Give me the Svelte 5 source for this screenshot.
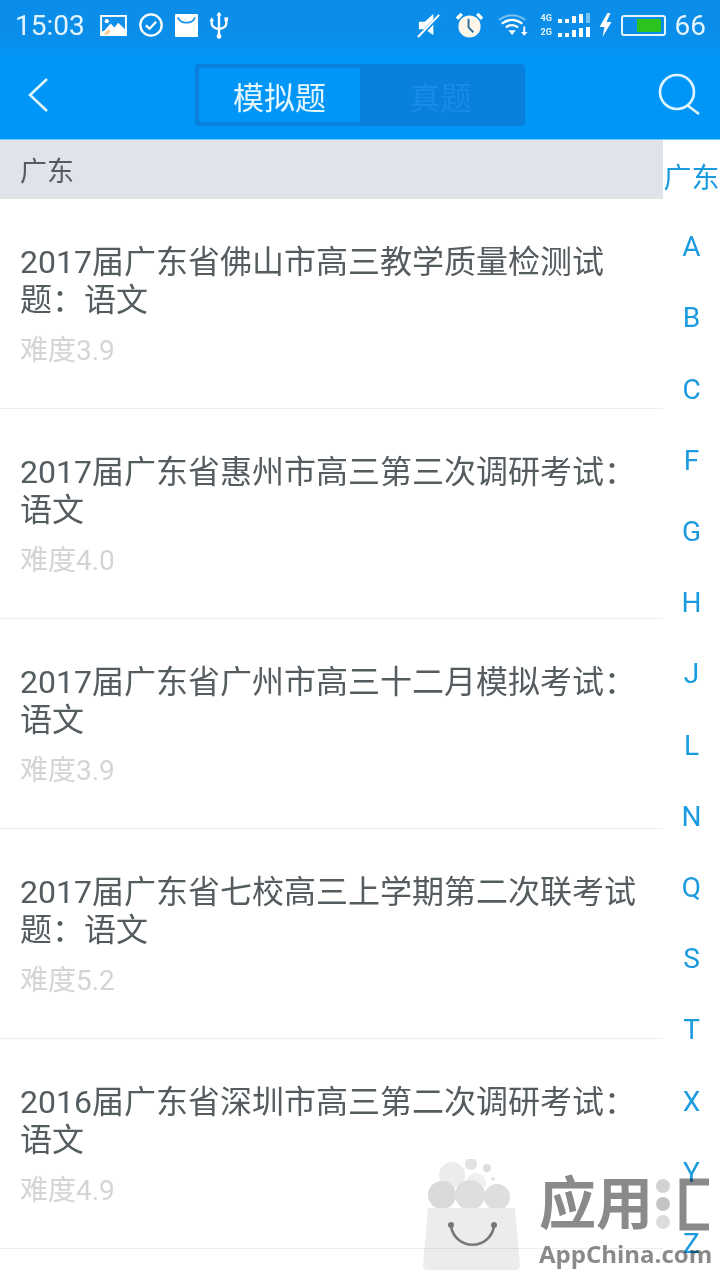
<script>
  const papers = [
    { title: '2017届广东省佛山市高三教学质量检测试题：语文', level: '3.9' },
    { title: '2017届广东省惠州市高三第三次调研考试：语文', level: '4.0' },
    { title: '2017届广东省广州市高三十二月模拟考试：语文', level: '3.9' },
    { title: '2017届广东省七校高三上学期第二次联考试题：语文', level: '5.2' },
    { title: '2016届广东省深圳市高三第二次调研考试：语文', level: '4.9' }
  ];
  const letters = ['广东', 'A', 'B', 'C', 'F', 'G', 'H', 'J', 'L', 'N', 'Q', 'S', 'T', 'X', 'Y', 'Z'];
  const bars = [4, 4, 7, 9, 10];
</script>

<div class="screen">
  <header class="top">
    <div class="status">
      <div class="status-left">
        <span class="time">15:03</span>
        <svg class="ic" width="27" height="21" viewBox="0 0 28 22">
          <rect width="28" height="22" fill="#fff" />
          <rect x="2" y="2" width="24" height="15" fill="#1090ea" />
          <circle cx="7" cy="6.5" r="2.2" fill="#fff" />
          <path d="M2 19 L11 9 L15 13 L19 8 L26 15 V22 H2 Z" fill="#fff" />
          <path d="M4 20 L9 15 L11 17 L7 21 Z" fill="#f4c98a" />
        </svg>
        <svg class="ic check" width="26" height="26" viewBox="0 0 28 28" fill="none" stroke="#fff">
          <circle cx="14" cy="14" r="11.5" stroke-width="2.5" />
          <path d="M8.5 14.5 L12.5 18 L19.5 10.5" stroke-width="2.5" />
        </svg>
        <svg class="ic" width="23" height="23" viewBox="0 0 24 24">
          <rect width="24" height="24" rx="1" fill="#fff" />
          <path d="M3 3.5 C6 11 18 11 21 3.5" fill="none" stroke="#1090ea" stroke-width="1.6" />
        </svg>
        <svg class="ic usb" width="20" height="29" viewBox="0 0 22 30" fill="none" stroke="#fff" stroke-width="2.6">
          <path d="M11 3 V28" />
          <path d="M3 9 V13 Q3 17 11 19 Q19 17 19 13 V9" />
          <path d="M11 0 L14 4 H8 Z M3 6 l2.5 4 h-5 Z" fill="#fff" stroke="none" />
          <rect x="17" y="6" width="4" height="4" fill="#fff" stroke="none" />
          <circle cx="11" cy="27" r="2.6" fill="#fff" stroke="none" />
        </svg>
      </div>
      <div class="status-right">
        <svg class="ic mute" width="25" height="27" viewBox="0 0 26 28">
          <path d="M2 10 H8 L17 2 V24 L8 18 H2 Z" fill="#fff" />
          <path d="M1 27 L25 2" stroke="#1090ea" stroke-width="4" />
          <path d="M1 26 L23 3" stroke="#fff" stroke-width="2" />
        </svg>
        <svg class="ic alarm" width="27" height="27" viewBox="0 0 28 28">
          <circle cx="14" cy="15" r="11.5" fill="#fff6ea" />
          <path d="M1 7 L6 2 M27 7 L22 2" stroke="#fff" stroke-width="3.5" />
          <path d="M13 7 V16 L18 21" fill="none" stroke="#2b6f9e" stroke-width="2" />
        </svg>
        <svg class="ic wifi" width="30" height="25" viewBox="0 0 32 26" fill="none" stroke="#fff">
          <path d="M1 7 Q15 -3 29 7" stroke-width="2" opacity="0.45" />
          <path d="M4 11 Q15 3 26 11" stroke-width="2.4" />
          <path d="M8.5 15 Q15 10 21.5 15" stroke-width="2.4" />
          <path d="M11 18 H19 L15 23 Z" fill="#fff" stroke="none" />
          <path d="M28 14 V21" stroke-width="2" />
          <path d="M24.5 20 H31.5 L28 24 Z" fill="#fff" stroke="none" />
        </svg>
        <div class="signal">
          {#each ['4G', '2G'] as net, r}
            <div class="sig-row">
              <span class="net">{net}</span>
              <span class="sig-bars">
                {#each bars as h, i}
                  <i style="height: {h}px; opacity: {r === 0 && i === 4 ? 0.45 : 1}"></i>
                {/each}
              </span>
            </div>
          {/each}
        </div>
        <svg class="ic" width="15" height="24" viewBox="0 0 14 24">
          <path d="M9 0 L1 14 H6 L4 24 L13 9 H8 L12 0 Z" fill="#fff" />
        </svg>
        <div class="battery"><div class="charge"></div></div>
        <span class="level">66</span>
      </div>
    </div>
    <nav class="bar">
      <svg class="back" width="22" height="34" viewBox="0 0 22 34" fill="none" stroke="#dff4ff" stroke-width="2.6">
        <path d="M20 1 L3 17 L20 33" />
      </svg>
      <div class="tabs">
        <div class="tab active">模拟题</div>
        <div class="tab">真题</div>
      </div>
      <svg class="search" width="44" height="44" viewBox="0 0 44 44" fill="none" stroke="#dff4ff" stroke-width="2.6">
        <circle cx="19" cy="19" r="17" />
        <path d="M29 32 L41 41" />
      </svg>
    </nav>
  </header>

  <main class="body">
    <section class="list">
      <div class="section-head">广东</div>
      {#each papers as p}
        <article class="row">
          <h3>{p.title}</h3>
          <p>难度{p.level}</p>
        </article>
      {/each}
    </section>
    <aside class="index">
      {#each letters as l}
        <span>{l}</span>
      {/each}
    </aside>
  </main>

  <div class="mark">
    <svg width="104" height="116" viewBox="0 0 104 116">
      <circle cx="50" cy="5" r="6" fill="#e2e2e2" />
      <circle cx="66" cy="9" r="4" fill="#dcdcdc" />
      <circle cx="31" cy="16" r="13" fill="#ececec" />
      <circle cx="55" cy="24" r="10" fill="#f0f0f0" />
      <circle cx="72" cy="20" r="2" fill="#e4e4e4" />
      <circle cx="21" cy="36" r="14" fill="#d9d9d9" />
      <circle cx="49" cy="36" r="15" fill="#dddddd" />
      <circle cx="76" cy="38" r="13" fill="#dedede" />
      <path d="M7 49 H94 L99 106 Q99 111 94 111 H7 Q2 111 2 106 Z" fill="#ececec" />
      <path d="M30 67 C34 92 69 92 73 67" fill="none" stroke="#777" stroke-width="2.6" />
      <circle cx="30" cy="66" r="3" fill="#777" />
      <circle cx="73" cy="66" r="3" fill="#777" />
    </svg>
    <div class="mark-text">
      <div class="mark-cn">
        <span>应用</span>
        <svg class="hui" width="58" height="56" viewBox="0 0 58 56">
          <circle cx="7" cy="9" r="7" fill="#d2d2d2" />
          <circle cx="7" cy="27" r="7" fill="#c4c4c4" />
          <circle cx="7" cy="45" r="7" fill="#dcdcdc" />
          <path d="M53 5 H27 V50 H53" fill="none" stroke="#8a8a8a" stroke-width="7" />
        </svg>
      </div>
      <div class="mark-en">AppChina.com</div>
    </div>
  </div>
</div>

<style>
  :global(body) {
    margin: 0;
    background: #fff;
  }

  .screen {
    position: relative;
    width: 720px;
    height: 1280px;
    overflow: hidden;
    font-family: Roboto, "Noto Sans CJK SC", sans-serif;
  }

  .top {
    height: 140px;
    background: linear-gradient(#0a8ee9 0, #0a8ee9 36px, #0096f8 62px);
    box-sizing: border-box;
    border-bottom: 1px solid #6fd0f8;
  }

  .status {
    height: 50px;
    display: flex;
    justify-content: space-between;
    align-items: center;
    padding: 0 14px 0 15px;
    color: #e4f4ff;
  }

  .status-left, .status-right {
    display: flex;
    align-items: center;
  }

  .status-left { gap: 11px; }
  .status-right { gap: 8px; }

  .time {
    font-size: 28px;
    margin-right: 4px;
  }

  .ic { display: block; }

  .mute { margin-right: 6px; }
  .alarm { margin-right: 7px; }
  .wifi { margin-right: 5px; }

  .signal {
    display: flex;
    flex-direction: column;
    gap: 4px;
  }

  .sig-row {
    display: flex;
    align-items: flex-end;
    gap: 4px;
  }

  .net {
    font-size: 9px;
    line-height: 10px;
    font-weight: 700;
    width: 13px;
  }

  .sig-bars {
    display: flex;
    align-items: flex-end;
    gap: 3px;
  }

  .sig-bars i {
    display: block;
    width: 4px;
    background: #fff;
  }

  .battery {
    width: 45px;
    height: 21px;
    box-sizing: border-box;
    border: 2px solid #e4f4ff;
    border-radius: 3px;
    padding: 2px 3px 2px 14px;
  }

  .charge {
    height: 100%;
    background: #2ec21e;
  }

  .level {
    font-size: 28px;
    margin-left: 1px;
  }

  .bar {
    height: 89px;
    display: flex;
    align-items: center;
    justify-content: space-between;
    padding: 0 18px 0 27px;
  }

  .tabs {
    display: flex;
    width: 330px;
    height: 62px;
    box-sizing: border-box;
    padding: 4px;
    margin: 1px 0 0 13px;
    background: #0880dc;
    border-radius: 4px;
  }

  .tab {
    flex: 1;
    display: flex;
    align-items: center;
    justify-content: center;
    font-size: 31px;
    color: #1a8be4;
    border-radius: 3px;
  }

  .tab.active {
    background: #0096f8;
    color: #e4f6ff;
  }

  .body {
    display: flex;
  }

  .list {
    flex: 1;
    min-width: 0;
  }

  .section-head {
    height: 59px;
    box-sizing: border-box;
    padding-left: 20px;
    display: flex;
    align-items: center;
    background: #e0e4ea;
    border-bottom: 1px solid #e2e2e2;
    font-size: 27px;
    color: #555c60;
  }

  .row {
    height: 210px;
    box-sizing: border-box;
    padding: 44px 20px 0;
    border-bottom: 1px solid #eeeeee;
  }

  .row h3 {
    margin: 0;
    width: 625px;
    font-size: 32px;
    font-weight: 400;
    line-height: 38px;
    color: #555c60;
  }

  .row p {
    margin: 14px 0 0;
    font-size: 28px;
    line-height: 36px;
    color: #d4d4d4;
  }

  .index {
    width: 57px;
    flex: none;
    display: flex;
    flex-direction: column;
    align-items: center;
  }

  .index span {
    height: 71.2px;
    flex: none;
    display: flex;
    align-items: center;
    justify-content: center;
    font-size: 28px;
    color: #1a9be0;
    white-space: nowrap;
  }

  /* watermark sits over the list and index */
  .mark {
    position: absolute;
    left: 421px;
    top: 1159px;
    display: flex;
    gap: 14px;
    pointer-events: none;
    mix-blend-mode: multiply;
  }

  .mark-text {
    padding-top: 18px;
    color: #8a8a8a;
    font-weight: 700;
  }

  .mark-cn {
    display: flex;
    align-items: center;
    gap: 3px;
    height: 56px;
    font-size: 57px;
    line-height: 56px;
    white-space: nowrap;
  }

  .hui { flex: none; }

  .mark-en {
    margin-top: 6px;
    font-family: "Open Sans", sans-serif;
    font-size: 24px;
    line-height: 30px;
    white-space: nowrap;
  }
</style>
